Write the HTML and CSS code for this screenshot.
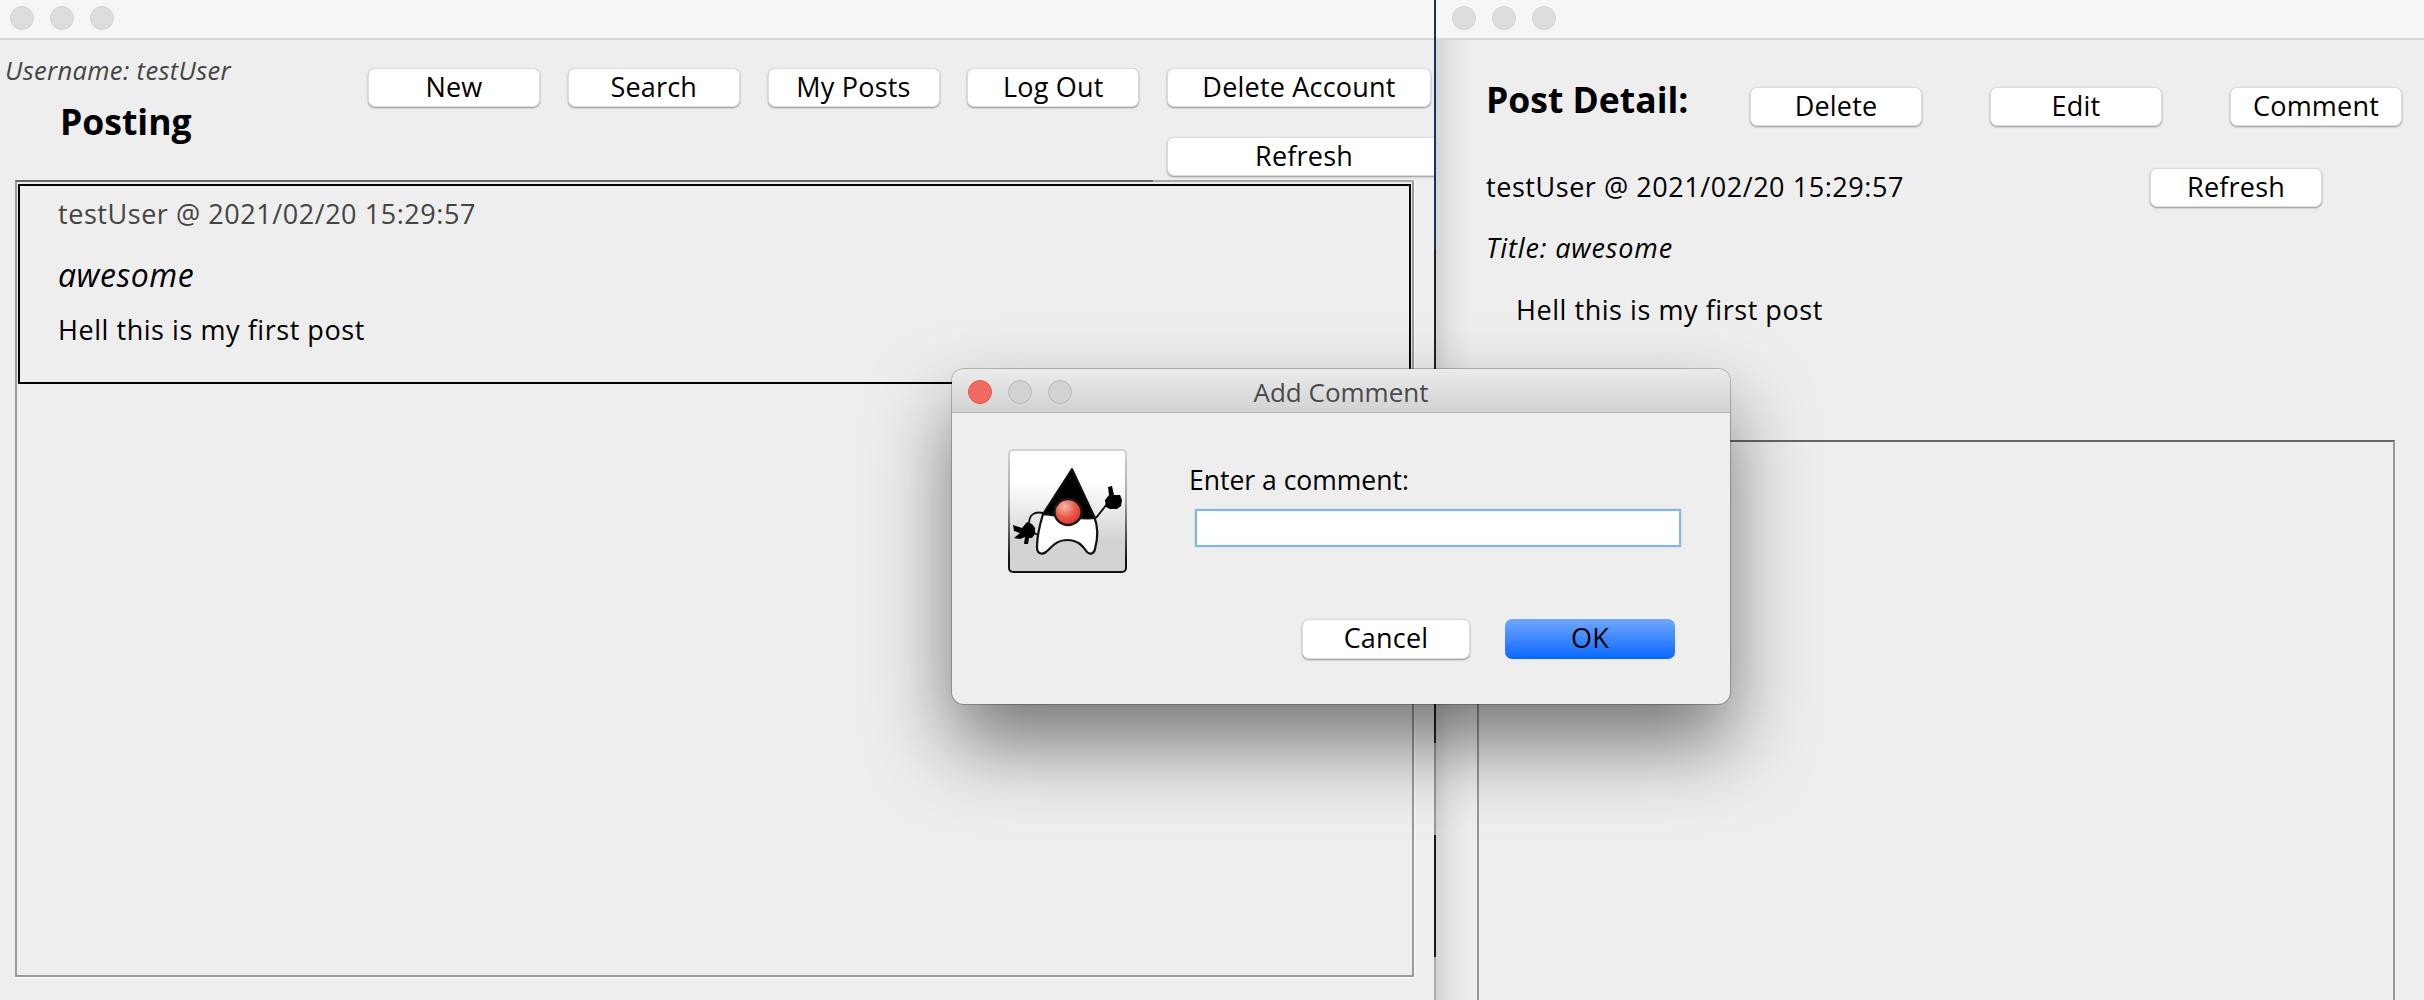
FILE: index.html
```html
<!DOCTYPE html>
<html lang="en">
<head>
<meta charset="utf-8">
<title>Posting</title>
<link rel="stylesheet" href="styles.css">
</head>
<body>
<div class="desktop">
  <section class="window window-left">
    <div class="titlebar"><i class="light"></i><i class="light"></i><i class="light"></i></div>
    <header class="left-head">
      <div class="left-brand">
        <div class="username">Username: testUser</div>
        <h1 class="posting">Posting</h1>
      </div>
      <div class="left-actions">
        <button class="btn">New</button>
        <button class="btn">Search</button>
        <button class="btn">My Posts</button>
        <button class="btn">Log Out</button>
        <button class="btn btn-wide">Delete Account</button>
        <button class="btn btn-refresh">Refresh</button>
      </div>
    </header>
    <div class="list-box">
      <article class="post-card">
        <div class="post-meta">testUser @ 2021/02/20 15:29:57</div>
        <div class="post-title">awesome</div>
        <div class="post-body">Hell this is my first post</div>
      </article>
    </div>
  </section>
  <div class="divider"></div>
  <section class="window window-right">
    <div class="titlebar"><i class="light"></i><i class="light"></i><i class="light"></i></div>
    <div class="detail">
      <div class="detail-top">
        <h2 class="detail-heading">Post Detail:</h2>
        <div class="detail-actions">
          <button class="btn">Delete</button>
          <button class="btn">Edit</button>
          <button class="btn">Comment</button>
        </div>
      </div>
      <div class="detail-meta-row">
        <div class="detail-meta">testUser @ 2021/02/20 15:29:57</div>
        <button class="btn">Refresh</button>
      </div>
      <div class="detail-title">Title: awesome</div>
      <div class="detail-body">Hell this is my first post</div>
      <div class="comment-box"></div>
    </div>
  </section>
  <div class="dialog">
    <div class="dialog-bar">
      <i class="light light-red"></i><i class="light light-dim"></i><i class="light light-dim"></i>
      <span class="dialog-title">Add Comment</span>
    </div>
    <div class="dialog-main">
      <div class="duke-box">
        <svg class="duke" viewBox="10 11 115 120" width="115" height="120" aria-hidden="true">
          <defs>
            <radialGradient id="nose" cx="0.38" cy="0.3" r="0.8">
              <stop offset="0" stop-color="#f6b7a8"/>
              <stop offset="0.5" stop-color="#ea5a4c"/>
              <stop offset="1" stop-color="#d42a22"/>
            </radialGradient>
          </defs>
          <path d="M43 73C34 71 29 75 29 84C29 90 33 93 38 95" fill="none" stroke="#111" stroke-width="1.8"/>
          <path d="M13 85L22 88L27 82L32 84L35 88L35 94L32 98L29 98L28 104L24 104L25 97L20 99L14 98L20 93L14 91Z" fill="#000"/>
          <path d="M96 78L107 64" fill="none" stroke="#000" stroke-width="1.8"/>
          <path d="M108 47L112 46L114 55L120 55L122 60L121 66L117 69L110 69L106 67L105 60L109 55Z" fill="#000"/>
          <path d="M43 74C40 84 37 98 37 107C37 114 42 115 46 112C52 107 56 100 67 100C78 100 83 106 87 112C90 115 94 114 95 109C98 98 98 86 94 76Z" fill="#fff" stroke="#111" stroke-width="2.2" stroke-linejoin="round"/>
          <path d="M72 29L43 74C52 75 82 80 95 78Z" fill="#000" stroke="#111" stroke-width="2" stroke-linejoin="round"/>
          <ellipse cx="68" cy="72" rx="13.5" ry="13" fill="url(#nose)" stroke="#1a1a1a" stroke-width="2.4"/>
        </svg>
      </div>
      <div class="dialog-form">
        <label class="dialog-label" for="comment">Enter a comment:</label>
        <input class="dialog-input" id="comment" type="text">
        <div class="dialog-actions">
          <button class="btn btn-cancel">Cancel</button>
          <button class="btn btn-ok">OK</button>
        </div>
      </div>
    </div>
  </div>
</div>
</body>
</html>
```

FILE: styles.css
```css
* { box-sizing: border-box; }
html, body { margin: 0; padding: 0; }
body {
  width: 2424px;
  height: 1000px;
  overflow: hidden;
  background: #eeeeee;
  font-family: "Open Sans", "DejaVu Sans", sans-serif;
  font-size: 27px;
  color: #000;
}
.desktop { position: relative; display: flex; width: 2424px; height: 1000px; overflow: hidden; }
.window { height: 1000px; overflow: hidden; background: #eeeeee; }
.window-left { width: 1434px; flex: none; }
.window-right {
  flex: 1;
  background: linear-gradient(90deg, #d2d2d2 0, #e4e4e4 14px, #eeeeee 34px);
}
.divider {
  width: 2px;
  flex: none;
  background: linear-gradient(180deg, #1c305f 0, #1c305f 250px, #222 250px, #222 743px, #999 743px, #999 835px, #1a1a1a 835px, #1a1a1a 957px, #aaa 957px);
}
.titlebar {
  display: flex;
  align-items: center;
  gap: 16px;
  height: 40px;
  padding: 0 0 3px 10px;
  background: #f6f6f6;
  border-bottom: 2px solid #d6d6d6;
}
.window-right .titlebar { padding-left: 16px; }
.light {
  display: block;
  width: 24px;
  height: 24px;
  border-radius: 50%;
  background: #dddddd;
  border: 1px solid #d2d2d2;
}
.btn {
  display: block;
  height: 39px;
  padding: 0 0 2px;
  background: #fff;
  border: 1px solid #dcdcdc;
  border-radius: 7px;
  box-shadow: 0 1px 2px rgba(0, 0, 0, .38);
  font: inherit;
  line-height: 34px;
  letter-spacing: .2px;
  color: #000;
  text-align: center;
}

.left-head { display: flex; height: 140px; }
.left-brand { width: 368px; flex: none; }
.username {
  padding: 13px 0 0 5px;
  font-style: italic;
  font-size: 25.5px;
  letter-spacing: .35px;
  line-height: 34px;
  color: #444;
}
.posting {
  margin: 0;
  padding: 16px 0 0 60px;
  font-size: 35.5px;
  line-height: 36px;
  font-weight: 700;
}
.left-actions {
  display: grid;
  grid-template-columns: 172px 172px 172px 172px 274px;
  grid-auto-rows: 39px;
  column-gap: 27.75px;
  row-gap: 30px;
  padding-top: 28px;
}
.btn-wide { width: 264px; }
.btn-refresh { grid-column: 5; }

.list-box {
  position: relative;
  width: 1399px;
  height: 797px;
  margin-left: 15px;
  padding: 2px 1px 0 1px;
  border: 2px solid #999;
  border-top-color: #666;
  box-shadow: 1px 1px 0 #fff;
}
.list-box::after {
  content: "";
  position: absolute;
  top: -2px;
  left: 1136px;
  right: -2px;
  height: 2px;
  background: #aaa;
}
.post-card {
  height: 200px;
  padding: 10px 0 0 38px;
  border: 2px solid #000;
}
.post-meta { line-height: 36px; letter-spacing: .55px; color: #444; }
.post-title { margin-top: 24px; font-style: italic; font-size: 32px; letter-spacing: .5px; line-height: 38px; }
.post-body { margin-top: 19px; letter-spacing: .55px; line-height: 34px; }

.detail { padding: 47px 0 0 50px; }
.detail-top { display: flex; align-items: flex-start; }
.detail-heading {
  width: 264px;
  flex: none;
  margin: -8px 0 0;
  font-size: 35.5px;
  line-height: 40px;
  font-weight: 700;
}
.detail-actions { display: flex; gap: 68px; }
.detail-actions .btn { width: 172px; }
.detail-meta-row { display: flex; align-items: center; margin-top: 42px; }
.detail-meta { width: 664px; flex: none; padding-bottom: 2px; letter-spacing: .55px; line-height: 36px; }
.detail-meta-row .btn { width: 172px; }
.detail-title { margin-top: 24px; font-style: italic; letter-spacing: .85px; line-height: 34px; }
.detail-body { margin-top: 28px; padding-left: 30px; letter-spacing: .55px; line-height: 34px; }
.comment-box {
  width: 918px;
  height: 600px;
  margin: 113px 0 0 -9px;
  border: 2px solid #999;
  border-top-color: #666;
}

.dialog {
  position: absolute;
  left: 952px;
  top: 369px;
  width: 778px;
  height: 335px;
  overflow: visible;
  background: #eeeeee;
  border-radius: 12px;
  box-shadow: 0 0 0 1px rgba(0, 0, 0, .22), 0 40px 80px 0 rgba(0, 0, 0, .5);
}
.dialog-bar {
  position: relative;
  display: flex;
  align-items: center;
  gap: 16px;
  height: 44px;
  padding: 2px 0 0 16px;
  background: linear-gradient(180deg, #ebebeb, #d2d2d2);
  border-bottom: 1px solid #b4b4b4;
  border-radius: 12px 12px 0 0;
}
.light-red { background: #ef6b5f; border-color: #e2594d; }
.light-dim { background: #d2d2d2; border-color: #b9b9b9; }
.dialog-title {
  position: absolute;
  left: 0;
  right: 0;
  top: 4px;
  font-size: 26px;
  line-height: 38px;
  text-align: center;
  color: #4a4a4a;
}
.dialog-main { display: flex; padding: 36px 0 0 56px; }
.duke-box {
  width: 119px;
  height: 124px;
  flex: none;
  margin-right: 62px;
  border: 2px solid transparent;
  border-radius: 5px;
  background:
    linear-gradient(180deg, #fff 0, #fff 26%, #d3d3d3 75%, #d3d3d3 100%) padding-box,
    linear-gradient(180deg, #d2d2d2 0, #a8a8a8 40%, #111 90%, #111 100%) border-box;
}
.duke { display: block; }
.dialog-form { display: flex; flex-direction: column; width: 491px; }
.dialog-label { font-size: 26.5px; line-height: 34px; margin-top: 14px; }
.dialog-input {
  display: block;
  width: 486px;
  height: 38px;
  margin: 12px 0 0 6px;
  padding: 0;
  background: #fff;
  border: 2px solid #82b4ec;
  box-shadow: 0 0 1px #82b4ec;
  outline: none;
}
.dialog-actions { display: flex; gap: 35px; margin: 72px 0 0 113px; }
.btn-cancel { width: 168px; height: 40px; }
.btn-ok {
  width: 170px;
  height: 40px;
  border: none;
  box-shadow: none;
  background: linear-gradient(180deg, #71a7fb, #0a68fe);
}
```
